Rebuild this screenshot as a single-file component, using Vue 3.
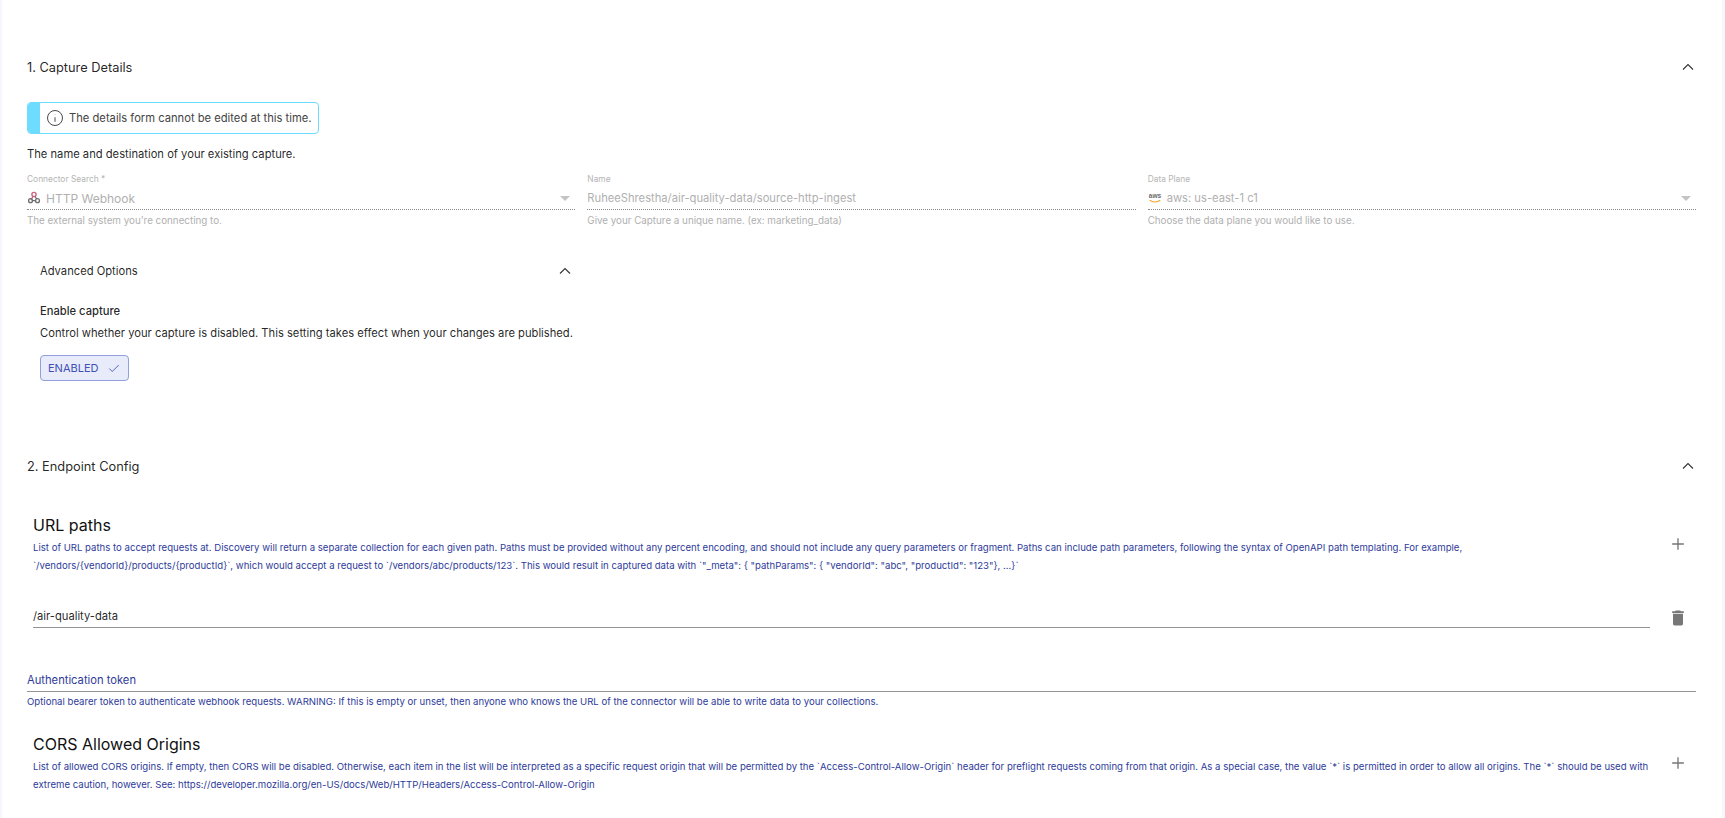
<template>
  <div class="page">
    <section class="section first">
      <header class="section__head">
        <span>1. Capture Details</span>
        <svg class="chevron" viewBox="0 0 24 24"><path d="M6 15l6-6 6 6" /></svg>
      </header>

      <div class="alert">
        <div class="alert__bar"></div>
        <svg class="alert__icon" viewBox="0 0 24 24">
          <circle cx="12" cy="12" r="10" />
          <path d="M12 11v6" />
          <path d="M12 7.200v.3" />
        </svg>
        <span>The details form cannot be edited at this time.</span>
      </div>

      <p class="intro">The name and destination of your existing capture.</p>

      <div class="form__row">
        <div v-for="field in fields" :key="field.label" class="field">
          <label>{{ field.label }}</label>
          <div class="field__input">
            <svg v-if="field.icon === 'webhook'" class="field__logo" viewBox="0 0 16 16">
              <circle cx="8" cy="4" r="2.400" fill="none" stroke="#c73a63" stroke-width="1.6" />
              <path d="M7 6l-2.600 4.400" stroke="#c73a63" stroke-width="1.6" fill="none" />
              <circle cx="4" cy="11" r="2.200" fill="none" stroke="#4b4b4b" stroke-width="1.5" />
              <circle cx="12" cy="11" r="2.200" fill="none" stroke="#4b4b4b" stroke-width="1.5" />
              <path d="M6 11h4M9 6l2 3" stroke="#4b4b4b" stroke-width="1.4" fill="none" />
            </svg>
            <svg v-if="field.icon === 'aws'" class="field__logo" viewBox="0 0 16 16">
              <text x="8" y="8.500" text-anchor="middle" font-size="7.500" font-weight="700" fill="#444" font-family="Liberation Sans, sans-serif">aws</text>
              <path d="M2 10.500c3.500 2.600 8.500 2.600 12 0" fill="none" stroke="#f29100" stroke-width="1.400" />
            </svg>
            <span class="field__value" :class="{ 'field__value--large': field.icon === 'webhook' }">{{ field.value }}</span>
            <span v-if="field.select" class="field__caret"></span>
          </div>
          <small>{{ field.help }}</small>
        </div>
      </div>

      <div class="advanced">
        <header class="advanced__head">
          <span>Advanced Options</span>
          <svg class="chevron chevron--inner" viewBox="0 0 24 24"><path d="M6 15l6-6 6 6" /></svg>
        </header>
        <h4>Enable capture</h4>
        <p>Control whether your capture is disabled. This setting takes effect when your changes are published.</p>
        <button class="toggle" type="button">
          ENABLED
          <svg viewBox="0 0 24 24"><path d="M4 13l5 5L20 7" /></svg>
        </button>
      </div>
    </section>

    <section class="section second">
      <header class="section__head">
        <span>2. Endpoint Config</span>
        <svg class="chevron" viewBox="0 0 24 24"><path d="M6 15l6-6 6 6" /></svg>
      </header>

      <div class="array urls">
        <div class="array__text">
          <h3>URL paths</h3>
          <p>List of URL paths to accept requests at. Discovery will return a separate collection for each given path. Paths must be provided without any percent encoding, and should not include any query parameters or fragment. Paths can include path parameters, following the syntax of OpenAPI path templating. For example, `/vendors/{vendorId}/products/{productId}`, which would accept a request to `/vendors/abc/products/123`. This would result in captured data with `"_meta": { "pathParams": { "vendorId": "abc", "productId": "123"}, ...}`</p>
        </div>
        <svg class="plus" viewBox="0 0 24 24"><path d="M12 5v14M5 12h14" /></svg>
      </div>

      <div class="path">
        <div class="path__input">/air-quality-data</div>
        <svg class="trash" viewBox="0 0 24 24">
          <path d="M6 19c0 1.100.9 2 2 2h8c1.100 0 2-.9 2-2V7H6v12zM19 4h-3.500l-1-1h-5l-1 1H5v2h14V4z" />
        </svg>
      </div>

      <div class="token">
        <div class="token__input">Authentication token</div>
        <small>Optional bearer token to authenticate webhook requests. WARNING: If this is empty or unset, then anyone who knows the URL of the connector will be able to write data to your collections.</small>
      </div>

      <div class="array cors">
        <div class="array__text">
          <h3>CORS Allowed Origins</h3>
          <p>List of allowed CORS origins. If empty, then CORS will be disabled. Otherwise, each item in the list will be interpreted as a specific request origin that will be permitted by the `Access-Control-Allow-Origin` header for preflight requests coming from that origin. As a special case, the value `*` is permitted in order to allow all origins. The `*` should be used with extreme caution, however. See: https://developer.mozilla.org/en-US/docs/Web/HTTP/Headers/Access-Control-Allow-Origin</p>
        </div>
        <svg class="plus" viewBox="0 0 24 24"><path d="M12 5v14M5 12h14" /></svg>
      </div>
    </section>
  </div>
</template>

<script setup>
const fields = [
  {
    label: 'Connector Search *',
    value: 'HTTP Webhook',
    help: "The external system you're connecting to.",
    icon: 'webhook',
    select: true
  },
  {
    label: 'Name',
    value: 'RuheeShrestha/air-quality-data/source-http-ingest',
    help: 'Give your Capture a unique name. (ex: marketing_data)',
    select: false
  },
  {
    label: 'Data Plane',
    value: 'aws: us-east-1 c1',
    help: 'Choose the data plane you would like to use.',
    icon: 'aws',
    select: true
  }
];
</script>

<style>
html,
body {
  margin: 0;
  background: #fff;
}
</style>

<style scoped>
.page {
  box-sizing: border-box;
  height: 818px;
  overflow: hidden;
  padding: 0 26px 0 25px;
  font-family: Inter, 'Liberation Sans', sans-serif;
  color: rgba(0, 0, 0, 0.87);
  background: #fff;
  border-left: 2px solid #f6f6fc;
  border-right: 3px solid #f6f6fc;
}

.section__head {
  display: flex;
  justify-content: space-between;
  align-items: center;
  height: 24px;
  font-size: 12.800px;
}

.first {
  padding-top: 55px;
}

.second {
  padding-top: 73px;
}

.chevron {
  width: 20px;
  height: 20px;
  margin-right: -2px;
  fill: none;
  stroke: #333;
  stroke-width: 1.300;
}

.chevron--inner {
  margin-right: 0;
}

.alert {
  display: flex;
  width: 292px;
  align-items: center;
  box-sizing: border-box;
  height: 32px;
  margin-top: 23px;
  border: 1px solid #6edcff;
  border-radius: 4px;
  overflow: hidden;
  font-size: 11.200px;
  color: #444;
}

.alert__bar {
  width: 12px;
  height: 100%;
  background: #6edcff;
}

.alert__icon {
  width: 18px;
  height: 18px;
  margin: 0 5px 0 6px;
  fill: none;
  stroke: #444;
  stroke-width: 1.300;
}

.intro {
  margin: 11px 0 0;
  font-size: 11.200px;
  line-height: 18px;
}

.form__row {
  display: grid;
  grid-template-columns: repeat(3, 1fr);
  gap: 12px;
  margin-top: 10px;
}

.field label {
  display: block;
  font-size: 8.400px;
  line-height: 12px;
  color: #b5b5b5;
}

.field__input {
  display: flex;
  align-items: center;
  height: 22px;
  padding-top: 2px;
  border-bottom: 1px dotted #8a8a8a;
  font-size: 11.200px;
  color: #b0b0b0;
}

.field__logo {
  width: 14px;
  height: 14px;
  margin-right: 5px;
  opacity: 0.8;
}

.field__value {
  flex: 1;
}

.field__value--large {
  font-size: 12px;
}

.field__caret {
  width: 0;
  height: 0;
  margin-right: 5px;
  border-left: 5px solid transparent;
  border-right: 5px solid transparent;
  border-top: 5px solid #c4c4c4;
}

.field small {
  display: block;
  margin-top: 4px;
  font-size: 9.800px;
  line-height: 13px;
  color: #b0b0b0;
}

.advanced {
  width: 548px;
  box-sizing: border-box;
  padding: 0 0 0 13px;
  margin-top: 32px;
}

.advanced__head {
  display: flex;
  justify-content: space-between;
  align-items: center;
  height: 24px;
  font-size: 11.200px;
}

.advanced h4 {
  margin: 19px 0 0;
  font-size: 11.200px;
  font-weight: 500;
  line-height: 18px;
}

.advanced p {
  margin: 4px 0 0;
  font-size: 11.200px;
  line-height: 18px;
  white-space: nowrap;
}

.toggle {
  display: flex;
  align-items: center;
  gap: 9px;
  height: 26px;
  margin-top: 13px;
  padding: 0 7px;
  border: 1px solid #8f9fe0;
  border-radius: 4px;
  background: #e8ebfa;
  color: #3f51b5;
  font: 400 11px Inter, 'Liberation Sans', sans-serif;
}

.toggle svg {
  width: 14px;
  height: 14px;
  fill: none;
  stroke: #3f51b5;
  stroke-width: 1.500;
}

.array {
  display: flex;
  align-items: center;
  gap: 18px;
  padding-left: 6px;
}

.array__text {
  flex: 1;
}

.array h3 {
  margin: 0 0 2px;
  font-size: 16px;
  font-weight: 400;
  line-height: 24px;
  color: #111;
}

.array p {
  margin: 0;
  font-size: 9.600px;
  line-height: 18px;
  color: #2e3b9a;
}

.plus {
  width: 20px;
  height: 20px;
  margin-right: 8px;
  fill: none;
  stroke: #777;
  stroke-width: 1.600;
}

.urls {
  margin-top: 35px;
}

.path {
  display: flex;
  align-items: center;
  gap: 18px;
  margin-top: 32px;
  padding-left: 6px;
}

.path__input {
  flex: 1;
  height: 20px;
  font-size: 11.200px;
  line-height: 18px;
  border-bottom: 1px solid #949494;
}

.trash {
  width: 20px;
  height: 20px;
  margin-right: 8px;
  fill: #777;
}

.token {
  margin-top: 43px;
}

.token__input {
  height: 20px;
  font-size: 11.200px;
  line-height: 18px;
  color: #2e3b9a;
  border-bottom: 1px solid #949494;
}

.token small {
  display: block;
  margin-top: 3px;
  font-size: 9.600px;
  line-height: 14px;
  color: #2e3b9a;
}

.cors {
  margin-top: 23px;
}
</style>
